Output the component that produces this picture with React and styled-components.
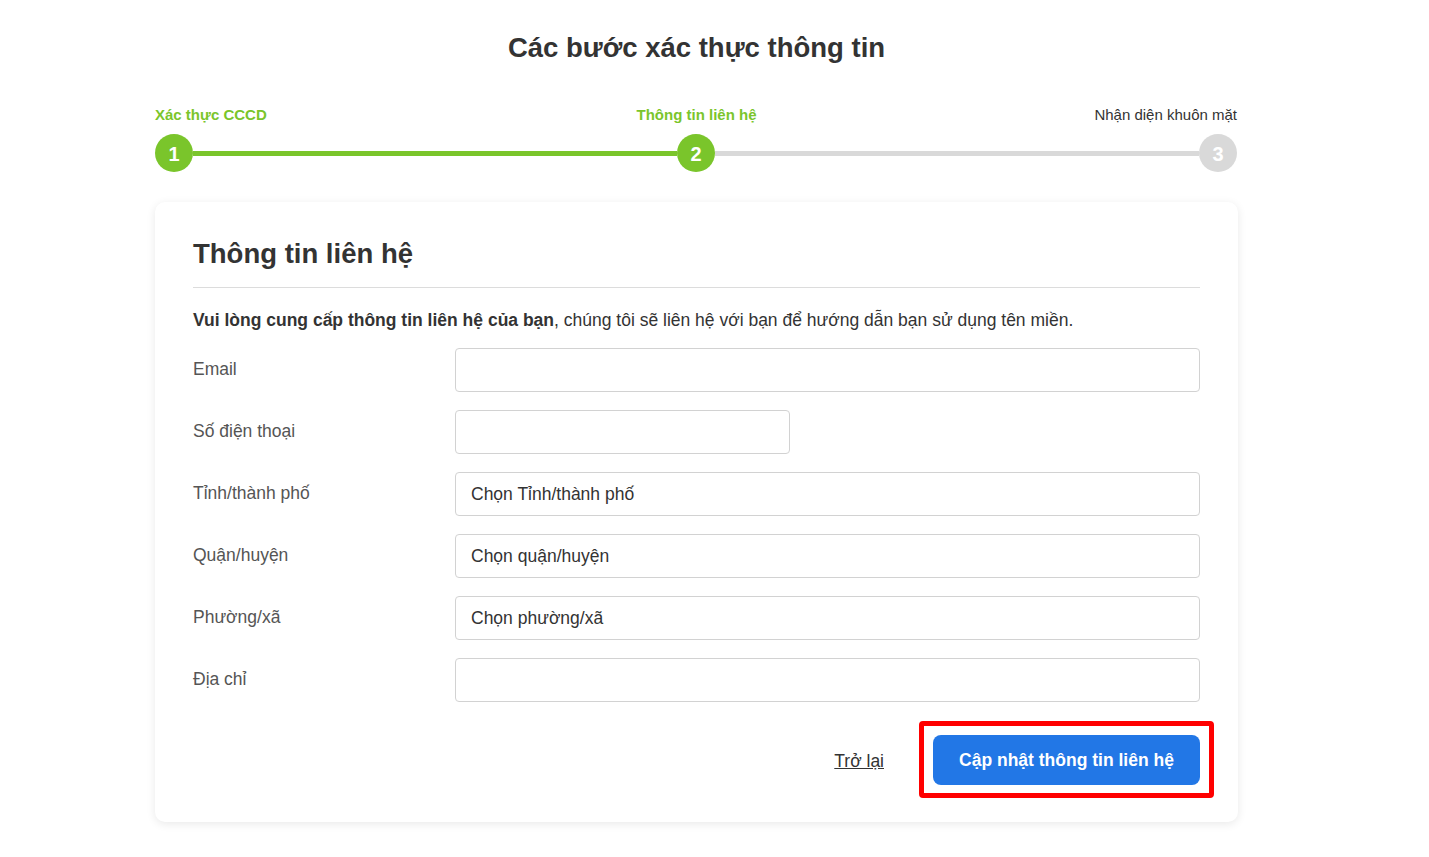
import React from "react";
import styled, { createGlobalStyle } from "styled-components";

const Global = createGlobalStyle`
  html, body { margin: 0; padding: 0; background: #fff; }
  body { font-family: "Liberation Sans", Arial, sans-serif; color: #333; }
  * { box-sizing: border-box; }
`;

const Page = styled.div`
  width: 1083px;
  margin-left: 155px;
  padding: 32px 0 40px;
`;

const Title = styled.h1`
  margin: 0;
  text-align: center;
  font-size: 27.5px;
  line-height: 32px;
  font-weight: 700;
  color: #333;
`;

const Steps = styled.div`
  margin-top: 41px;
`;

const StepLabels = styled.div`
  display: grid;
  grid-template-columns: 1fr 1fr 1fr;
  height: 20px;
`;

const StepLabel = styled.div`
  font-size: 15px;
  line-height: 20px;
  font-weight: ${(p) => (p.$done ? 700 : 400)};
  color: ${(p) => (p.$done ? "#7ac52b" : "#333")};
  text-align: ${(p) => p.$align};
  padding-right: ${(p) => (p.$align === "right" ? "1px" : "0")};
`;

const Track = styled.div`
  display: flex;
  align-items: center;
  margin-top: 9px;
  padding-right: 1px;
`;

const Circle = styled.div`
  width: 38px;
  height: 38px;
  border-radius: 50%;
  flex: none;
  display: flex;
  align-items: center;
  justify-content: center;
  background: ${(p) => (p.$done ? "#7ac52b" : "#d9d9d9")};
  color: #fff;
  font-weight: 700;
  font-size: 20px;
  padding-top: 2px;
`;

const Bar = styled.div`
  flex: 1;
  height: 5px;
  background: ${(p) => (p.$done ? "#7ac52b" : "#d9d9d9")};
`;

const Card = styled.div`
  margin-top: 30px;
  background: #fff;
  border-radius: 10px;
  box-shadow: 0 2px 10px rgba(0, 0, 0, 0.09);
  padding: 35px 38px 24px;
`;

const CardHeading = styled.h2`
  margin: 0;
  font-size: 27.5px;
  line-height: 34px;
  font-weight: 700;
  color: #333;
  padding-bottom: 16px;
  border-bottom: 1px solid #dcdcdc;
`;

const Intro = styled.p`
  margin: 20px 0 16px;
  font-size: 17.5px;
  line-height: 24px;
  color: #333;
  b { font-weight: 700; }
`;

const Form = styled.div`
  display: flex;
  flex-direction: column;
  gap: 18px;
`;

const Row = styled.div`
  display: grid;
  grid-template-columns: 262px 1fr;
  align-items: center;
`;

const Label = styled.label`
  font-size: 17.5px;
  color: #555;
  margin-top: -2px;
`;

const Field = styled.div`
  height: 44px;
  width: ${(p) => p.$w || "100%"};
  border: 1px solid #d2d2d2;
  border-radius: 4px;
  padding: 0 15px;
  display: flex;
  align-items: center;
  font-size: 17.5px;
  color: #333;
  background: #fff;
`;

const Actions = styled.div`
  display: flex;
  justify-content: flex-end;
  align-items: center;
  gap: 35px;
  margin-top: 19px;
  margin-right: -14px;
`;

const BackLink = styled.a`
  font-size: 17.5px;
  color: #333;
  text-decoration: underline;
  padding-top: 3px;
`;

const Highlight = styled.div`
  border: 5px solid #ff0000;
  border-radius: 4px;
  padding: 9px 9px 8px;
`;

const PrimaryButton = styled.button`
  width: 267px;
  height: 50px;
  border: none;
  border-radius: 8px;
  background: #2277e6;
  color: #fff;
  font-family: "Liberation Sans", Arial, sans-serif;
  font-weight: 700;
  font-size: 17.5px;
  display: block;
`;

const fields = [
  { label: "Email", value: "" },
  { label: "Số điện thoại", value: "", w: "335px" },
  { label: "Tỉnh/thành phố", value: "Chọn Tỉnh/thành phố" },
  { label: "Quận/huyện", value: "Chọn quận/huyện" },
  { label: "Phường/xã", value: "Chọn phường/xã" },
  { label: "Địa chỉ", value: "" },
];

export default function App() {
  return (
    <>
      <Global />
      <Page>
        <Title>Các bước xác thực thông tin</Title>
        <Steps>
          <StepLabels>
            <StepLabel $done $align="left">Xác thực CCCD</StepLabel>
            <StepLabel $done $align="center">Thông tin liên hệ</StepLabel>
            <StepLabel $align="right">Nhận diện khuôn mặt</StepLabel>
          </StepLabels>
          <Track>
            <Circle $done>1</Circle>
            <Bar $done />
            <Circle $done>2</Circle>
            <Bar />
            <Circle>3</Circle>
          </Track>
        </Steps>
        <Card>
          <CardHeading>Thông tin liên hệ</CardHeading>
          <Intro>
            <b>Vui lòng cung cấp thông tin liên hệ của bạn</b>, chúng tôi sẽ liên hệ với bạn để hướng dẫn bạn sử dụng tên miền.
          </Intro>
          <Form>
            {fields.map((f) => (
              <Row key={f.label}>
                <Label>{f.label}</Label>
                <Field $w={f.w}>{f.value}</Field>
              </Row>
            ))}
          </Form>
          <Actions>
            <BackLink>Trở lại</BackLink>
            <Highlight>
              <PrimaryButton>Cập nhật thông tin liên hệ</PrimaryButton>
            </Highlight>
          </Actions>
        </Card>
      </Page>
    </>
  );
}
